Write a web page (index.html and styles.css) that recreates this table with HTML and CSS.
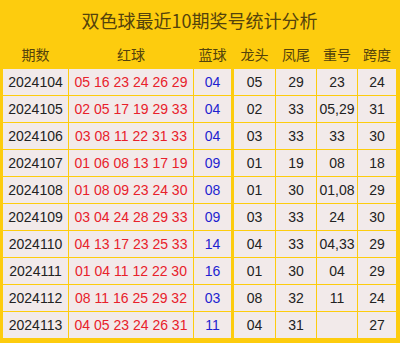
FILE: index.html
```html
<!DOCTYPE html>
<html lang="zh">
<head>
<meta charset="utf-8">
<link rel="stylesheet" href="styles.css">
</head>
<body>
<div class="board">
  <div class="title">双色球最近10期奖号统计分析</div>
  <div class="grid head">
    <div>期数</div><div>红球</div><div>蓝球</div><div class="after-blue">龙头</div><div>凤尾</div><div>重号</div><div>跨度</div>
  </div>
  <div class="grid body">
    <div>2024104</div><div class="red">05 16 23 24 26 29</div><div class="blue">04</div><div class="after-blue">05</div><div>29</div><div>23</div><div>24</div>
    <div>2024105</div><div class="red">02 05 17 19 29 33</div><div class="blue">04</div><div class="after-blue">02</div><div>33</div><div>05,29</div><div>31</div>
    <div>2024106</div><div class="red">03 08 11 22 31 33</div><div class="blue">04</div><div class="after-blue">03</div><div>33</div><div>33</div><div>30</div>
    <div>2024107</div><div class="red">01 06 08 13 17 19</div><div class="blue">09</div><div class="after-blue">01</div><div>19</div><div>08</div><div>18</div>
    <div>2024108</div><div class="red">01 08 09 23 24 30</div><div class="blue">08</div><div class="after-blue">01</div><div>30</div><div>01,08</div><div>29</div>
    <div>2024109</div><div class="red">03 04 24 28 29 33</div><div class="blue">09</div><div class="after-blue">03</div><div>33</div><div>24</div><div>30</div>
    <div>2024110</div><div class="red">04 13 17 23 25 33</div><div class="blue">14</div><div class="after-blue">04</div><div>33</div><div>04,33</div><div>29</div>
    <div>2024111</div><div class="red">01 04 11 12 22 30</div><div class="blue">16</div><div class="after-blue">01</div><div>30</div><div>04</div><div>29</div>
    <div>2024112</div><div class="red">08 11 16 25 29 32</div><div class="blue">03</div><div class="after-blue">08</div><div>32</div><div>11</div><div>24</div>
    <div>2024113</div><div class="red">04 05 23 24 26 31</div><div class="blue">11</div><div class="after-blue">04</div><div>31</div><div></div><div>27</div>
  </div>
</div>
</body>
</html>
```
FILE: styles.css
```css
html, body {
  margin: 0;
  padding: 0;
  background: #ffffff;
}
.board {
  width: 400px;
  height: 343px;
  box-sizing: border-box;
  background: #fdcc0e;
  padding: 0 4px 5px 3px;
  font-family: "Liberation Sans", "Noto Sans CJK SC", sans-serif;
}
.title {
  height: 38px;
  line-height: 40px;
  text-align: center;
  font-family: "Noto Sans CJK SC", sans-serif;
  font-size: 18px;
  color: #54430c;
}
.grid {
  display: grid;
  grid-template-columns: 65px 124px 37px 43px 40px 40px 38px;
  column-gap: 1px;
}
.grid > .after-blue {
  margin-left: 2px;
}
.head {
  height: 31px;
  align-items: center;
  font-family: "Noto Sans CJK SC", sans-serif;
  font-size: 14px;
  color: #54430c;
}
.head > div {
  text-align: center;
  line-height: 28px;
}
.body {
  grid-auto-rows: 26px;
  row-gap: 1px;
  font-size: 14px;
  color: #222222;
}
.body > div {
  background: #f2eaea;
  text-align: center;
  line-height: 27px;
}
.red {
  color: #e8212b;
}
.blue {
  color: #1f1fd0;
}
```
